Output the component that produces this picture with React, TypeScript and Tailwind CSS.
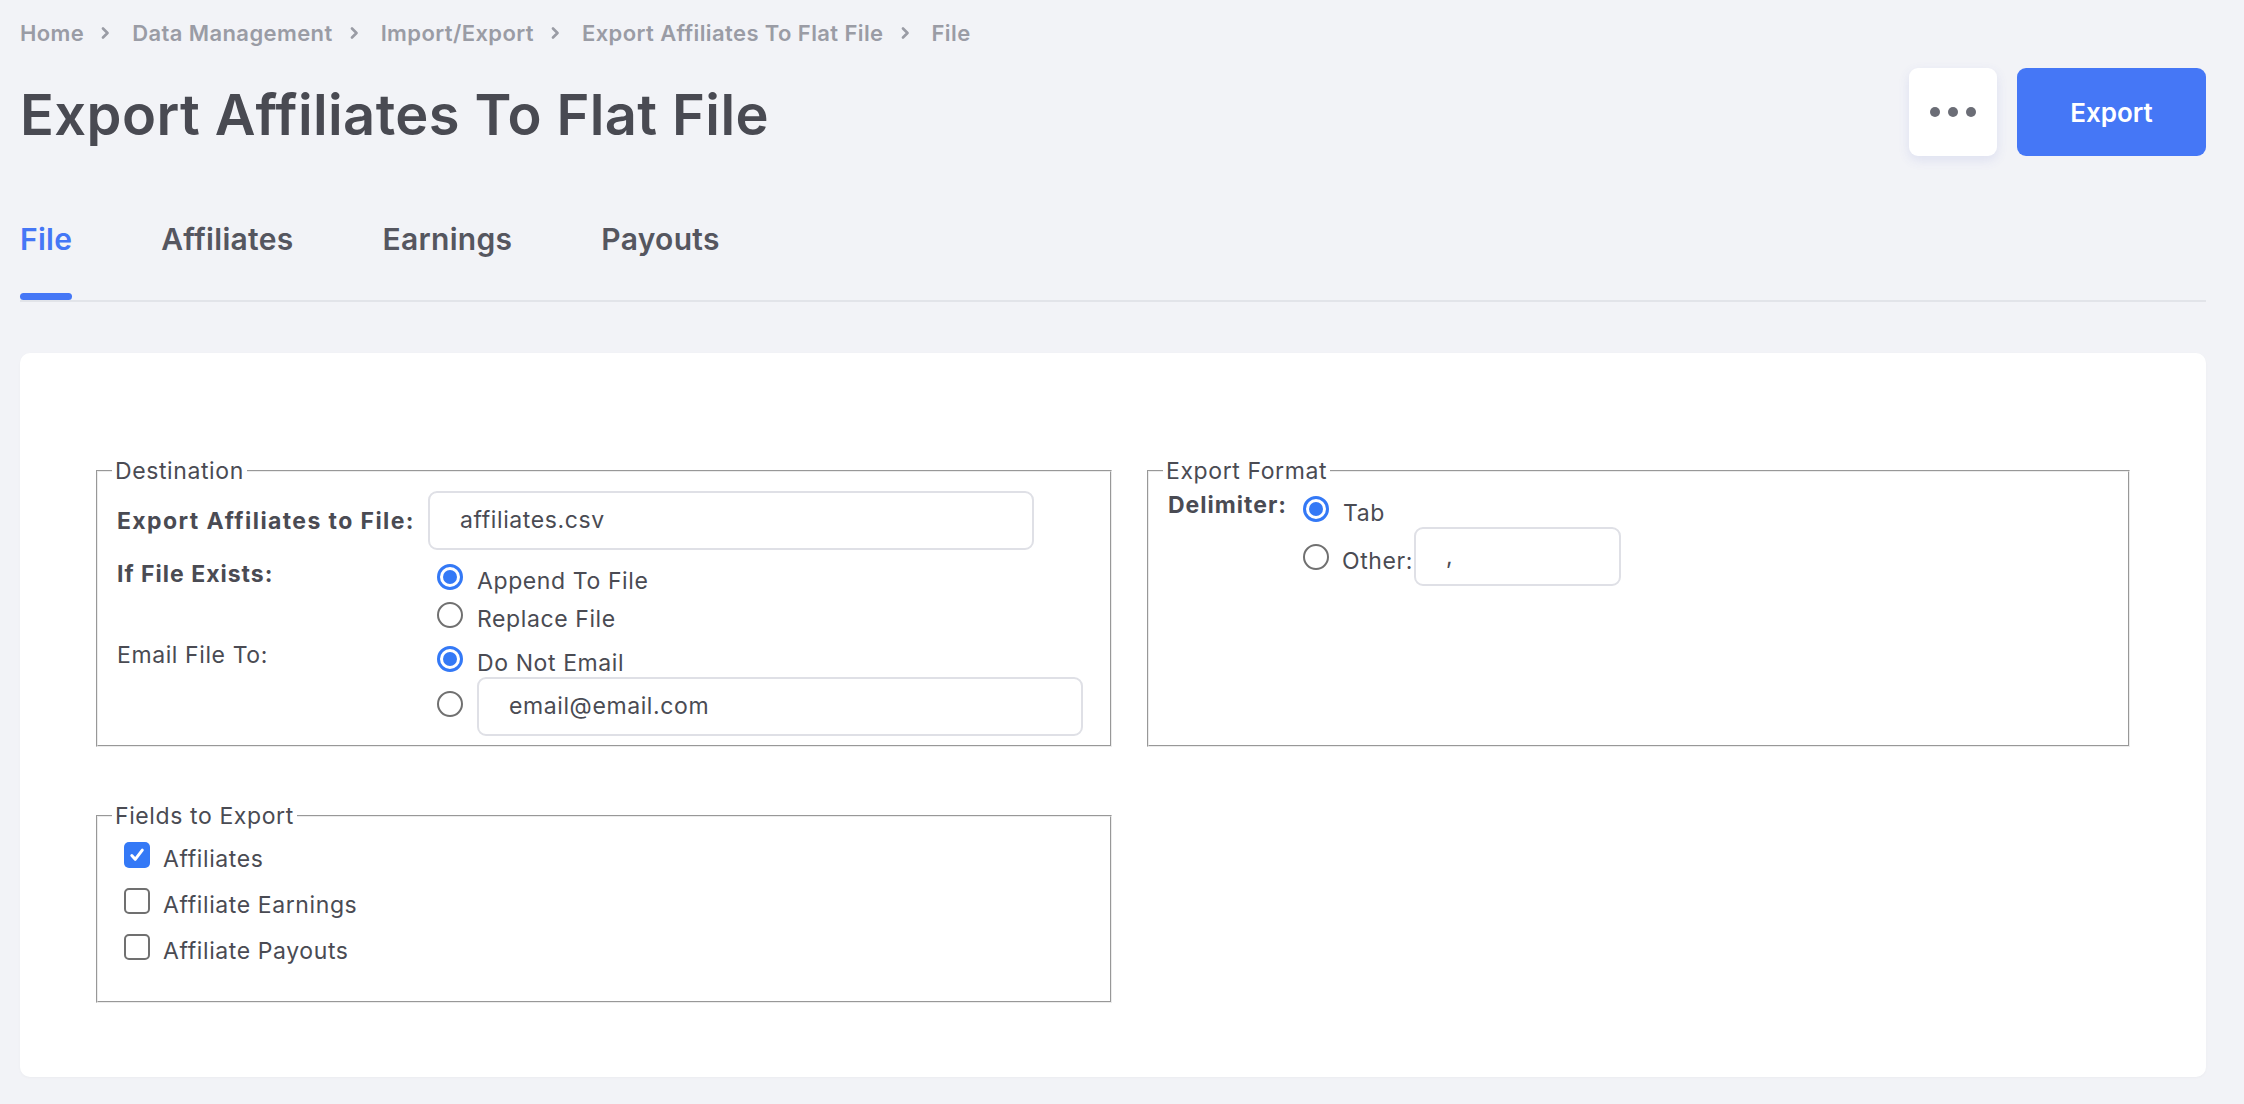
import React from 'react';

const crumbs = ['Home', 'Data Management', 'Import/Export', 'Export Affiliates To Flat File', 'File'];
const tabs = ['File', 'Affiliates', 'Earnings', 'Payouts'];
const fields: [string, boolean][] = [
  ['Affiliates', true],
  ['Affiliate Earnings', false],
  ['Affiliate Payouts', false],
];

function Chevron() {
  return (
    <svg width="14" height="12" viewBox="0 0 14 12" className="shrink-0">
      <path d="M2 1.5l4.5 4.5L2 10.5" fill="none" stroke="#9a9ca5" strokeWidth="2.6" strokeLinecap="round" strokeLinejoin="round" />
    </svg>
  );
}

function Radio({ on }: { on?: boolean }) {
  if (on) {
    return (
      <span className="flex h-[26px] w-[26px] shrink-0 items-center justify-center rounded-full border-[3px] border-[#3479f6] bg-white">
        <span className="block h-[14px] w-[14px] rounded-full bg-[#3479f6]" />
      </span>
    );
  }
  return <span className="block h-[26px] w-[26px] shrink-0 rounded-full border-2 border-[#707070] bg-white" />;
}

function RadioLine({ on, label, className = '' }: { on?: boolean; label: string; className?: string }) {
  return (
    <label className={`flex items-start ${className}`}>
      <span className="ml-[9px] mt-[-3px] block">
        <Radio on={on} />
      </span>
      <span className="ml-[14px] leading-[28px]">{label}</span>
    </label>
  );
}

function Checkbox({ on }: { on?: boolean }) {
  if (on) {
    return (
      <span className="flex h-[26px] w-[26px] shrink-0 items-center justify-center rounded-[5px] bg-[#3479f6]">
        <svg width="18" height="18" viewBox="0 0 18 18">
          <path d="M3.8 9.6l3.4 3.7L14.3 4.2" fill="none" stroke="#fff" strokeWidth="3" strokeLinecap="round" strokeLinejoin="round" />
        </svg>
      </span>
    );
  }
  return <span className="block h-[26px] w-[26px] shrink-0 rounded-[5px] border-2 border-[#707070] bg-white" />;
}

function TextBox({ value, className = '' }: { value: string; className?: string }) {
  return (
    <div className={`flex h-[59px] shrink-0 items-center rounded-[9px] border-2 border-[#dfe0e6] bg-white pl-[30px] ${className}`}>
      {value}
    </div>
  );
}

function Group({ title, className = '', children }: { title: string; className?: string; children: React.ReactNode }) {
  return (
    <fieldset className={`min-w-0 border-2 border-[#ececec] px-[14px] [border-style:groove] ${className}`}>
      <legend className="px-[3px] text-[23px] leading-[28px]">{title}</legend>
      {children}
    </fieldset>
  );
}

export default function App() {
  return (
    <div className="min-h-screen bg-[#f2f3f7] pl-[20px] pr-[38px] pt-[19px] font-['Inter',sans-serif] text-[#4a4b53]">
      {/* breadcrumb */}
      <nav className="flex items-center gap-[17px] text-[22px] font-semibold leading-[28px] tracking-[0.4px] text-[#9a9ca5]">
        {crumbs.map((c, i) => (
          <React.Fragment key={c}>
            {i > 0 && <Chevron />}
            <span>{c}</span>
          </React.Fragment>
        ))}
      </nav>

      {/* header */}
      <div className="mt-[21px] flex h-[88px] items-center justify-between">
        <h1 className="mt-[5px] text-[56px] font-semibold leading-[68px] tracking-[0.4px] text-[#494a52]">Export Affiliates To Flat File</h1>
        <div className="flex gap-[20px]">
          <button className="flex h-[88px] w-[88px] items-center justify-center gap-[8px] rounded-[9px] bg-white shadow-[0_4px_12px_rgba(70,90,200,0.12)]">
            <span className="block h-[10px] w-[10px] rounded-full bg-[#6b6d76]" />
            <span className="block h-[10px] w-[10px] rounded-full bg-[#6b6d76]" />
            <span className="block h-[10px] w-[10px] rounded-full bg-[#6b6d76]" />
          </button>
          <button className="h-[88px] w-[189px] rounded-[9px] bg-[#4577f6] text-[26px] font-semibold text-white">Export</button>
        </div>
      </div>

      {/* tabs */}
      <div className="mt-[64px] flex gap-[89px] border-b-2 border-[#e2e4e9]">
        {tabs.map((t, i) => (
          <div key={t} className="flex flex-col">
            <span className={`text-[30px] font-semibold leading-[38px] tracking-[0.3px] ${i === 0 ? 'text-[#4577f6]' : 'text-[#55565f]'}`}>{t}</span>
            <span className={`mt-[35px] block h-[7px] rounded-full ${i === 0 ? 'bg-[#4577f6]' : 'bg-transparent'}`} />
          </div>
        ))}
      </div>

      {/* form card */}
      <div className="mt-[51px] rounded-[10px] bg-white px-[76px] pb-[74px] pt-[104px] text-[23px] tracking-[0.6px] shadow-[0_1px_3px_rgba(0,0,0,0.03)]">
        <div className="grid grid-cols-[1016px_1fr] gap-[35px]">
          <Group title="Destination">
            <div className="ml-[5px] pb-[9px]">
              <div className="mt-[6px] flex items-center">
                <span className="w-[311px] shrink-0 font-bold leading-[28px] tracking-[1.4px]">Export Affiliates to File:</span>
                <TextBox value="affiliates.csv" className="w-[606px]" />
              </div>
              <div className="mt-[10px] flex items-start">
                <span className="w-[311px] shrink-0 font-bold leading-[28px] tracking-[1px]">If File Exists:</span>
                <div className="flex flex-col">
                  <RadioLine on label="Append To File" className="mt-[7px]" />
                  <RadioLine label="Replace File" className="mt-[10px]" />
                </div>
              </div>
              <div className="mt-[8px] flex items-start">
                <span className="w-[311px] shrink-0 leading-[28px]">Email File To:</span>
                <div className="flex flex-col">
                  <RadioLine on label="Do Not Email" className="mt-[8px]" />
                  <div className="flex items-start">
                    <span className="ml-[9px] mt-[14px] block">
                      <Radio />
                    </span>
                    <TextBox value="email@email.com" className="ml-[14px] w-[606px]" />
                  </div>
                </div>
              </div>
            </div>
          </Group>

          <Group title="Export Format">
            <div className="ml-[5px] flex items-start">
              <span className="mt-[6px] w-[126px] shrink-0 font-bold leading-[28px] tracking-[1px]">Delimiter:</span>
              <div className="flex flex-col">
                <RadioLine on label="Tab" className="mt-[14px]" />
                <div className="flex h-[59px] items-start">
                  <span className="ml-[9px] mt-[17px] block">
                    <Radio />
                  </span>
                  <span className="ml-[13px] mt-[20px] leading-[28px]">Other:</span>
                  <TextBox value="," className="ml-px w-[207px]" />
                </div>
              </div>
            </div>
          </Group>
        </div>

        <Group title="Fields to Export" className="mt-[55px] w-[1016px]">
          <div className="ml-[12px] mt-[15px] flex flex-col gap-[18px] pb-[36px]">
            {fields.map(([label, on]) => (
              <label key={label} className="flex items-start">
                <span className="mt-[-3px] block">
                  <Checkbox on={on} />
                </span>
                <span className="ml-[13px] leading-[28px]">{label}</span>
              </label>
            ))}
          </div>
        </Group>
      </div>
    </div>
  );
}
